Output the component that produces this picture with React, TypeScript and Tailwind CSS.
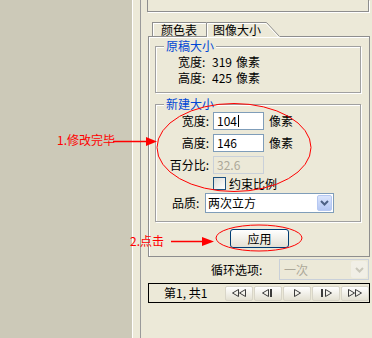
import React from 'react';

type NavKind = 'first' | 'prev' | 'play' | 'next' | 'last';

// small outline triangles used by the frame navigation buttons
const NavIcon = ({ kind }: { kind: NavKind }) => {
  const left = (x: number) => `M${x + 6.5} 0.5 L${x + 0.5} 4 L${x + 6.5} 7.5 Z`;
  const right = (x: number) => `M${x + 0.5} 0.5 L${x + 6.5} 4 L${x + 0.5} 7.5 Z`;
  return (
    <svg width="16" height="8" viewBox="0 0 16 8" fill="none" stroke="#3c3c3c">
      {kind === 'first' && (
        <>
          <path d={left(1)} />
          <path d={left(8)} />
        </>
      )}
      {kind === 'prev' && (
        <>
          <path d={left(2)} />
          <rect x="10" y="0" width="2" height="8" fill="#3c3c3c" stroke="none" />
        </>
      )}
      {kind === 'play' && <path d={right(5)} />}
      {kind === 'next' && (
        <>
          <rect x="3" y="0" width="2" height="8" fill="#3c3c3c" stroke="none" />
          <path d={right(7)} />
        </>
      )}
      {kind === 'last' && (
        <>
          <path d={right(1)} />
          <path d={right(8)} />
        </>
      )}
    </svg>
  );
};

const Chevron = ({ color }: { color: string }) => (
  <svg width="9" height="6" viewBox="0 0 9 6">
    <path d="M1 1 L4.5 4.5 L8 1" stroke={color} strokeWidth="2" fill="none" />
  </svg>
);

const GroupBox = ({ title, className, children }: { title: string; className: string; children: React.ReactNode }) => (
  <div className={`relative ml-[6px] w-[206px] border border-[#a0a0a0] shadow-[inset_1px_1px_0_#fff,1px_1px_0_#fff] ${className}`}>
    <span className="absolute -top-[7px] left-[8px] bg-[#ece9d8] px-[2px] text-[#0046d5]">{title}</span>
    {children}
  </div>
);

const TextField = ({ value, disabled, caret }: { value: string; disabled?: boolean; caret?: boolean }) => (
  <div
    className={`flex h-[18px] w-[51px] items-center border pl-[3px] ${
      disabled ? 'border-[#c9d0d9] bg-[#ece9d8] text-[#aca899]' : 'border-[#7f9db9] bg-white'
    }`}
  >
    {value}
    {caret && <span className="ml-px h-[12px] w-px bg-black" />}
  </div>
);

const navButtons: NavKind[] = ['first', 'prev', 'play', 'next', 'last'];

export default function App() {
  return (
    <div className="relative flex h-[338px] w-[372px] overflow-hidden bg-[#ece9d8] font-['Noto_Sans_CJK_SC','Noto_Sans',sans-serif] text-[12px] leading-[12px] text-black">
      <div className="h-full w-[132px] shrink-0 bg-[#ccc9b8]" />
      <div className="h-full w-px shrink-0 bg-white" />
      <div className="h-full w-[7px] shrink-0" />
      <div className="h-full w-px shrink-0 bg-[#9a9a9a]" />

      <div className="flex w-[231px] shrink-0 flex-col">
        {/* panel above, cut off at the top */}
        <div className="ml-[6px] h-[12px] w-[222px] border-x border-b border-[#8e8e8e] shadow-[1px_1px_0_#fff]" />

        {/* tabs */}
        <div className="ml-[11px] mt-[10px] flex h-[14px] items-end">
          <div className="flex h-[14px] w-[54px] items-center border-l border-t border-[#8e8e8e] pl-[8px] shadow-[inset_1px_1px_0_#fff]">
            颜色表
          </div>
          <div className="relative z-10 -mb-px flex h-[15px] w-[74px] items-center bg-[#ece9d8] pl-[7px]">
            <svg className="absolute left-0 top-0" width="74" height="15">
              <path d="M0.5 15 V0.5 H60.5 L73.5 14.5" stroke="#8e8e8e" fill="none" />
              <path d="M1.5 15 V1.5 H60 L72.5 15" stroke="#ffffff" fill="none" />
            </svg>
            <span className="relative">图像大小</span>
          </div>
        </div>

        <div className="ml-[7px] flex h-[221px] w-[222px] flex-col border border-[#8e8e8e] shadow-[inset_1px_1px_0_#fff]">
          <GroupBox title="原稿大小" className="mt-[9px] h-[47px]">
            <div className="flex flex-col gap-[4px] pl-[22px] pt-[9px]">
              <div className="flex">
                <span className="w-[34px]">宽度:</span>
                <span className="w-[24px]">319</span>
                <span>像素</span>
              </div>
              <div className="flex">
                <span className="w-[34px]">高度:</span>
                <span className="w-[24px]">425</span>
                <span>像素</span>
              </div>
            </div>
          </GroupBox>

          <GroupBox title="新建大小" className="mt-[11px] h-[118px]">
            <div className="flex flex-col pt-[7px]">
              <div className="flex h-[18px] items-center">
                <span className="w-[57px] pr-[4px] text-right">宽度:</span>
                <TextField value="104" caret />
                <span className="ml-[5px]">像素</span>
              </div>
              <div className="mt-[4px] flex h-[18px] items-center">
                <span className="w-[57px] pr-[4px] text-right">高度:</span>
                <TextField value="146" />
                <span className="ml-[5px]">像素</span>
              </div>
              <div className="mt-[4px] flex h-[18px] items-center">
                <span className="w-[57px] pr-[4px] text-right">百分比:</span>
                <TextField value="32.6" disabled />
              </div>
              <div className="mt-[3px] flex h-[13px] items-center pl-[57px]">
                <span className="h-[13px] w-[13px] border border-[#1c5180] bg-gradient-to-br from-[#dcdcd7] to-white" />
                <span className="ml-[3px]">约束比例</span>
              </div>
              <div className="mt-[3px] flex h-[20px] items-center pl-[16px]">
                <span className="w-[33px]">品质:</span>
                <div className="flex h-[20px] w-[129px] items-center border border-[#7f9db9] bg-white pl-[2px]">
                  <span className="flex-1">两次立方</span>
                  <span className="mr-px flex h-[16px] w-[15px] items-center justify-center rounded-[2px] border border-[#b6c8f2] bg-gradient-to-b from-[#dbe5fc] to-[#b4c7f3]">
                    <Chevron color="#4d6185" />
                  </span>
                </div>
              </div>
            </div>
          </GroupBox>

          <button className="ml-[81px] mt-[7px] flex h-[19px] w-[59px] items-center justify-center rounded-[3px] border border-[#003c74] bg-gradient-to-b from-white to-[#e3e1d4] text-black">
            应用
          </button>
        </div>

        {/* loop options */}
        <div className="mt-[2px] flex h-[21px] items-center">
          <span className="ml-[70px] w-[68px]">循环选项:</span>
          <div className="flex h-[21px] w-[90px] items-center border border-[#c9d0d9] bg-[#ece9d8] pl-[4px] text-[#aca899]">
            <span className="flex-1">一次</span>
            <span className="mr-px flex h-[17px] w-[16px] items-center justify-center rounded-[2px] bg-[#f1efe6]">
              <Chevron color="#c9c7ba" />
            </span>
          </div>
        </div>

        {/* frame navigation */}
        <div className="ml-[7px] mt-[3px] flex h-[20px] w-[222px] items-center border border-black pl-[15px]">
          <span className="flex-1">第1, 共1</span>
          <div className="flex gap-px">
            {navButtons.map((k) => (
              <span
                key={k}
                className="flex h-[15px] w-[28px] items-center justify-center rounded-[2px] border border-[#d8d5c8] bg-gradient-to-b from-white to-[#e4e1d3]"
              >
                <NavIcon kind={k} />
              </span>
            ))}
          </div>
        </div>
      </div>

      {/* red annotations */}
      <svg className="pointer-events-none absolute left-0 top-0" width="372" height="338">
        <ellipse cx="234" cy="147.5" rx="77" ry="44" fill="none" stroke="#ff0000" />
        <ellipse cx="259" cy="238" rx="43" ry="13" fill="none" stroke="#ff0000" />
        <line x1="113" y1="141.5" x2="147" y2="141.5" stroke="#ff0000" strokeWidth="1.5" />
        <polygon points="146,137 157,141.5 146,146" fill="#ff0000" />
        <line x1="171" y1="241.5" x2="203" y2="241.5" stroke="#ff0000" strokeWidth="1.5" />
        <polygon points="202,237 214,241.5 202,246" fill="#ff0000" />
      </svg>
      <span className="pointer-events-none absolute left-[57px] top-[134px] text-[#ff0000]">1.修改完毕</span>
      <span className="pointer-events-none absolute left-[130px] top-[235px] text-[#ff0000]">2.点击</span>
    </div>
  );
}
